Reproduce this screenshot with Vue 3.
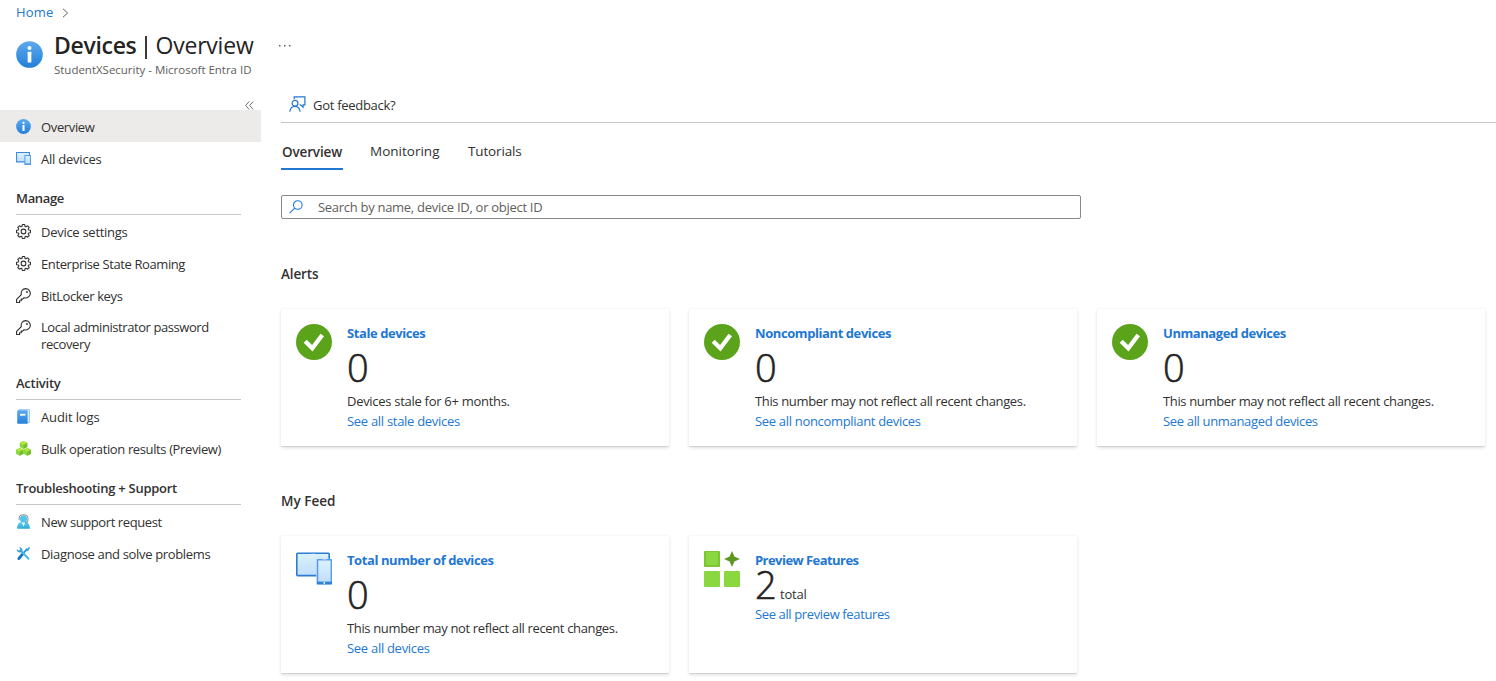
<script setup>
const nav = [
  {
    title: '',
    items: [
      { icon: 'info', lines: [['Overview', 53.5]], active: true },
      { icon: 'devices', lines: [['All devices', 60.5]] },
    ],
  },
  {
    title: 'Manage',
    width: 48,
    items: [
      { icon: 'gear', lines: [['Device settings', 86.5]] },
      { icon: 'gear', lines: [['Enterprise State Roaming', 144]] },
      { icon: 'key', lines: [['BitLocker keys', 81.5]] },
      { icon: 'key', lines: [['Local administrator password', 167.7], ['recovery', 49]] },
    ],
  },
  {
    title: 'Activity',
    width: 44.5,
    items: [
      { icon: 'book', lines: [['Audit logs', 58.5]] },
      { icon: 'cubes', lines: [['Bulk operation results (Preview)', 180]] },
    ],
  },
  {
    title: 'Troubleshooting + Support',
    width: 161,
    items: [
      { icon: 'person', lines: [['New support request', 120.7]] },
      { icon: 'tools', lines: [['Diagnose and solve problems', 169.3]] },
    ],
  },
]

const recent = ['This number may not reflect all recent changes.', 270.7]

const sections = [
  {
    title: 'Alerts',
    width: 37.5,
    cards: [
      { icon: 'check', title: ['Stale devices', 78.3], value: 0, note: ['Devices stale for 6+ months.', 162.7], link: ['See all stale devices', 112.9] },
      { icon: 'check', title: ['Noncompliant devices', 136], value: 0, note: recent, link: ['See all noncompliant devices', 165.7] },
      { icon: 'check', title: ['Unmanaged devices', 122.7], value: 0, note: recent, link: ['See all unmanaged devices', 154.7] },
    ],
  },
  {
    title: 'My Feed',
    width: 54.5,
    cards: [
      { icon: 'bigdevices', title: ['Total number of devices', 146.5], value: 0, note: recent, link: ['See all devices', 82.7] },
      { icon: 'preview', title: ['Preview Features', 103.5], value: 2, unit: 'total', link: ['See all preview features', 134.7] },
    ],
  },
]

// Tracks a label so that it occupies the given width.
const vFit = {
  mounted(el, { value }) {
    const natural = el.getBoundingClientRect().width
    el.style.letterSpacing = `${(value - natural) / el.textContent.length}px`
  },
}
</script>

<template>
  <div class="page">
    <svg class="defs" width="0" height="0">
      <defs>
        <linearGradient id="gBlue" x1="0" y1="0" x2="0" y2="1"><stop offset="0" stop-color="#5ea9ee" /><stop offset="1" stop-color="#2380d8" /></linearGradient>
        <linearGradient id="gScreen" x1="0" y1="0" x2="0" y2="1"><stop offset="0" stop-color="#dcf2fa" /><stop offset="1" stop-color="#bfdefb" /></linearGradient>
        <linearGradient id="gCyan" x1="0" y1="0" x2="0" y2="1"><stop offset="0" stop-color="#5ccdf0" /><stop offset="1" stop-color="#2fa9d3" /></linearGradient>
        <symbol id="info" viewBox="0 0 16 16">
          <circle cx="8" cy="8" r="7.9" fill="url(#gBlue)" />
          <circle cx="8" cy="4.2" r="1.2" fill="#fff" />
          <rect x="6.9" y="6.3" width="2.2" height="6.4" rx=".3" fill="#fff" />
        </symbol>
        <symbol id="devices" viewBox="0 0 16 16">
          <path d="M.6 1.6h13.7v10H.6z" fill="url(#gScreen)" stroke="#3d87d6" stroke-width="1.1" />
          <path d="M9.500 4.800h5.900v9.400H9.500z" fill="url(#gScreen)" stroke="#5b9ee8" stroke-width="1.1" />
          <path d="M9 14h6.900" stroke="#3d87d6" stroke-width="1" />
        </symbol>
        <symbol id="gear" viewBox="0 0 16 16">
          <path d="M6.300 2.700 6.700.6H9.300L9.700 2.700 10.600 3 12.400 1.900 14.100 3.600 13 5.400 13.300 6.300 15.400 6.700V9.300L13.300 9.700 13 10.600 14.100 12.400 12.400 14.100 10.600 13 9.700 13.300 9.300 15.400H6.700L6.300 13.300 5.400 13 3.600 14.100 1.900 12.400 3 10.600 2.700 9.700 .6 9.300V6.700L2.700 6.300 3 5.400 1.900 3.600 3.600 1.900 5.400 3Z" fill="none" stroke="#323130" stroke-width="1.150" stroke-linejoin="round" />
          <circle cx="8" cy="8" r="2.500" fill="none" stroke="#323130" stroke-width="1.150" />
        </symbol>
        <symbol id="key" viewBox="0 0 16 16">
          <path d="M10.300.7a4.900 4.900 0 0 0-4.600 6.300L.6 12.200v3.200h3.200v-1.800h1.800v-1.800h1.500l1.500-1.500A4.950 4.950 0 1 0 10.300.7Z" fill="none" stroke="#323130" stroke-width="1.200" stroke-linejoin="round" />
          <circle cx="11.700" cy="4.300" r="1" fill="#323130" />
        </symbol>
        <symbol id="book" viewBox="0 0 16 16">
          <rect x="2.400" y=".2" width="12.400" height="14.800" rx=".9" fill="#8ec3f1" />
          <path d="M3 1.200h10.800v12.800H3z" fill="#e3f2fb" />
          <path d="M1.300 2c0-.5.4-.8.9-.8h10.200v14.500h-10.200c-.5 0-.9-.3-.9-.8Z" fill="url(#gBlue)" />
          <rect x="4.300" y="5.100" width="5.700" height="2" fill="#fff" />
        </symbol>
        <symbol id="cubes" viewBox="0 0 16 16">
          <g id="cube">
            <path d="M8 .1 12 2.100V6.300L8 8.400 4 6.300V2.100Z" fill="#8ad73f" />
            <path d="M8 .1 12 2.100 8 4.200 4 2.100Z" fill="#b0e63a" />
            <path d="M8 4.200 12 2.100V6.300L8 8.400Z" fill="#76bc2d" />
          </g>
          <use href="#cube" x="-4" y="7.300" />
          <use href="#cube" x="4" y="7.300" />
        </symbol>
        <symbol id="person" viewBox="0 0 16 16">
          <path d="M1.200 15.700c0-3.900 1.900-6.800 4.200-6.800h5.200c2.300 0 4.200 2.900 4.200 6.800Z" fill="url(#gCyan)" />
          <path d="M5.900 8.800 8 13.200l2.100-4.400Z" fill="#e4f6fd" />
          <circle cx="8" cy="5.300" r="3.800" fill="#4ec6ec" />
          <path d="M3.300 6.400V4.700C3.300 2.200 5.400.7 8 .7s4.700 1.500 4.700 4v1.900c0 1.500-1.200 2.600-3 2.600" fill="none" stroke="#8b8f93" stroke-width="1.100" />
        </symbol>
        <symbol id="tools" viewBox="0 0 16 16">
          <path d="M12.300 2.800 3 13" stroke="#2a8fd0" stroke-width="2" />
          <path d="M14.200.8 11 4l.4 1.400 1.300.2 2.300-3.500Z" fill="#35a9de" />
          <path d="M6.800 9 3 13.400" stroke="#1473c4" stroke-width="3" stroke-linecap="round" />
          <path d="M5 4.800 13.200 13.500" stroke="#3cb8e4" stroke-width="2.200" stroke-linecap="round" />
          <path d="M1.100 3.200 3 5 4.800 3.500 3.300 1.300C5.500.8 7.200 2.600 6.800 4.800 6.200 6.800 4 7.500 2.400 6.500 1.100 5.700.6 4.400 1.100 3.200Z" fill="#3aa0da" />
        </symbol>
        <symbol id="check" viewBox="0 0 36 36">
          <circle cx="18" cy="18" r="18" fill="#5ba31a" />
          <path d="M9.200 17.200 16.300 24.200 26.300 11" fill="none" stroke="#fff" stroke-width="4.300" stroke-linejoin="miter" />
        </symbol>
        <symbol id="bigdevices" viewBox="0 0 36 36">
          <rect x=".8" y="2.300" width="32.400" height="22.300" rx=".8" fill="url(#gScreen)" stroke="#2b7cd3" stroke-width="1.600" />
          <path d="M15 2.300h4.500" stroke="#5f9fe3" stroke-width="1" />
          <rect x="20.200" y="7.700" width="15.800" height="25.800" rx=".5" fill="#b9d8f7" />
          <rect x="21.600" y="8.700" width="13.700" height="24" rx=".5" fill="url(#gScreen)" stroke="#5a9cec" stroke-width="1.400" />
          <path d="M21 31.900h15" stroke="#2f80d8" stroke-width="2.600" />
          <path d="M26.500 8.800h4" stroke="#b9d8f7" stroke-width="1" />
          <circle cx="28.300" cy="31.900" r=".9" fill="#fff" />
        </symbol>
        <symbol id="preview" viewBox="0 0 36 36">
          <rect x="0" y="0" width="16" height="16" rx="1" fill="#7cc530" />
          <rect x="2" y="1" width="12" height="13" fill="#8ad73f" />
          <rect x="0" y="20" width="16" height="16" rx="1" fill="#8ad73f" />
          <rect x="20" y="20" width="16" height="16" rx="1" fill="#8ad73f" />
          <path d="M28 0 30.400 5.600 36 8 30.400 10.400 28 16 25.600 10.400 20 8 25.600 5.600Z" fill="#5e9624" />
        </symbol>
      </defs>
    </svg>

    <nav class="crumbs">
      <a><span v-fit="37.5">Home</span></a>
      <svg width="7" height="10" viewBox="0 0 7 10"><path d="M1 .8 5.600 5 1 9.200" fill="none" stroke="#605e5c" stroke-width="1" /></svg>
    </nav>

    <header class="head">
      <svg class="head-icon"><use href="#info" /></svg>
      <div class="head-text">
        <h1><b v-fit="82.5">Devices</b><i></i><span v-fit="98">Overview</span></h1>
        <p><span v-fit="197.5">StudentXSecurity - Microsoft Entra ID</span></p>
      </div>
      <svg class="more" width="12" height="2"><path d="M0 0h1.500v1.500H0zM5 0h1.500v1.500H5zM10 0h1.500v1.500H10z" fill="#605e5c" /></svg>
    </header>

    <div class="body">
      <aside>
        <div class="collapse">
          <svg width="9" height="9" viewBox="0 0 9 9"><path d="M4.200.5.700 4.500l3.500 4M8.200.5 4.700 4.500l3.500 4" fill="none" stroke="#605e5c" stroke-width=".9" /></svg>
        </div>
        <section v-for="group in nav" :key="group.title">
          <h3 v-if="group.title"><span v-fit="group.width">{{ group.title }}</span></h3>
          <a v-for="item in group.items" :key="item.lines[0][0]" class="item" :class="{ active: item.active, tall: item.lines.length > 1 }">
            <svg class="icon"><use :href="`#${item.icon}`" /></svg>
            <div class="label">
              <div v-for="line in item.lines" :key="line[0]"><span v-fit="line[1]">{{ line[0] }}</span></div>
            </div>
          </a>
        </section>
      </aside>

      <main>
        <div class="toolbar">
          <svg width="17" height="17" viewBox="0 0 17 17" fill="none" stroke="#2277d2" stroke-width="1.200">
            <path d="M5.200 3.300V.8h10.700v8h-1.800v2.300L11.500 8.900h-1" />
            <circle cx="6" cy="7.200" r="2.900" />
            <path d="M.8 15.800c.4-3.400 2.400-5.500 5.200-5.500s4.800 2.100 5.100 5.500" />
          </svg>
          <span v-fit="82.3">Got feedback?</span>
        </div>
        <div class="tabs">
          <div class="tab on"><span v-fit="60">Overview</span></div>
          <div class="tab"><span v-fit="69.5">Monitoring</span></div>
          <div class="tab"><span v-fit="53.5">Tutorials</span></div>
        </div>
        <div class="search">
          <svg width="14" height="14" viewBox="0 0 14 14" fill="none" stroke="#2277d2" stroke-width="1.100"><circle cx="8.800" cy="5" r="4.300" /><path d="M5.700 8.200.6 13.200" /></svg>
          <span v-fit="224.3">Search by name, device ID, or object ID</span>
        </div>

        <section v-for="section in sections" :key="section.title" class="section">
          <h2><span v-fit="section.width">{{ section.title }}</span></h2>
          <div class="cards">
            <article v-for="card in section.cards" :key="card.title[0]" class="card">
              <svg class="card-icon"><use :href="`#${card.icon}`" /></svg>
              <div class="card-text">
                <h4><span v-fit="card.title[1]">{{ card.title[0] }}</span></h4>
                <div class="value" :class="{ tight: card.unit }">
                  <strong v-fit="21">{{ card.value }}</strong>
                  <small v-if="card.unit"><span v-fit="26.5">{{ card.unit }}</span></small>
                </div>
                <p v-if="card.note"><span v-fit="card.note[1]">{{ card.note[0] }}</span></p>
                <a><span v-fit="card.link[1]">{{ card.link[0] }}</span></a>
              </div>
            </article>
          </div>
        </section>
      </main>
    </div>
  </div>
</template>

<style>
body {
  background: #fff;
  overflow: hidden;
}
</style>

<style scoped>
.page {
  height: 681px;
  overflow: hidden;
  display: flex;
  flex-direction: column;
  font: 13px/20px "Segoe UI", "Open Sans", "Noto Sans", sans-serif;
  color: #323130;
  white-space: nowrap;
}
.page * { box-sizing: border-box; }
svg { display: block; flex: none; }
.defs { height: 0; }
h1, h2, h3, h4, p { margin: 0; }
a { color: #2277d2; }
.crumbs {
  display: flex;
  align-items: center;
  gap: 8px;
  height: 25px;
  padding-left: 16px;
}
.crumbs a { margin-top: -2px; }
.head {
  display: flex;
  height: 69px;
  padding-left: 16px;
}
.head-icon { width: 27px; height: 27px; margin: 16px 11px 0 0; }
.head-text { width: 200px; }
h1 {
  display: flex;
  align-items: center;
  height: 34px;
  margin: 3px 0 1px;
  font-size: 23px;
  line-height: 34px;
  font-weight: 400;
  color: #252423;
}
h1 b { font-weight: 600; }
h1 i { width: 1.5px; height: 23px; margin: 4px 9px 0 8.5px; background: #3b3a39; }
.head p { font-size: 11.5px; line-height: 14px; color: #605e5c; }
.more { margin: 20px 0 0 25px; }
.body { display: flex; flex: 1; min-height: 0; }
aside { width: 261px; flex: none; }
.collapse { height: 16px; padding: 7px 0 0 245px; }
h3 {
  width: 225px;
  height: 41px;
  margin-left: 16px;
  padding-top: 14px;
  border-bottom: 1px solid #c8c6c4;
  font-size: 13px;
  font-weight: 600;
}
.item {
  display: flex;
  gap: 10px;
  min-height: 32px;
  padding: 8px 0 6px 16px;
  color: #323130;
}
.item.active { background: #edebe9; }
.icon { width: 15px; height: 15px; margin-top: 1px; }
.label { line-height: 17px; padding-top: 1px; }
.item.tall { height: 48px; padding-bottom: 0; }
.item.tall .label { padding-top: 0; }
main { flex: 1; padding-left: 20px; }
.toolbar {
  display: flex;
  align-items: center;
  gap: 7px;
  height: 29px;
  padding: 0 0 7px 8px;
  border-bottom: 1px solid #c8c6c4;
}
.tabs { display: flex; gap: 27px; height: 72px; padding-top: 17px; }
.tab { height: 30px; line-height: 22px; font-size: 13.5px; }
.tab.on {
  width: 62px;
  padding: 1px 0 0 1px;
  border-bottom: 2px solid #2277d2;
  font-weight: 600;
}
.tab + .tab + .tab { margin-left: 1.5px; }
.search {
  display: flex;
  align-items: center;
  gap: 15px;
  width: 800px;
  height: 24px;
  padding-left: 7px;
  border: 1px solid #8a8886;
  border-radius: 2px;
  color: #605e5c;
}
.section h2 {
  height: 90px;
  padding-top: 45px;
  font-size: 13.5px;
  font-weight: 600;
}
.cards { display: flex; gap: 20px; }
.card {
  display: flex;
  gap: 15px;
  width: 388px;
  height: 137px;
  padding: 15px;
  border-radius: 1px;
  background: #fff;
  box-shadow: 0 1.6px 3.6px rgba(0, 0, 0, .13), 0 .3px .9px rgba(0, 0, 0, .09);
}
.card-icon { width: 36px; height: 36px; }
.card-text { margin-top: -1px; }
.card h4 { color: #2277d2; font-size: 13px; font-weight: 700; line-height: 20px; }
.value { display: flex; align-items: baseline; gap: 4px; height: 48px; line-height: 48px; }
.value strong {
  font-size: 38px;
  font-weight: 300;
  color: #252423;
  -webkit-text-stroke: .6px #252423;
}
.value small { font-size: 13px; }
.value.tight { height: 34px; line-height: 28px; }
</style>
